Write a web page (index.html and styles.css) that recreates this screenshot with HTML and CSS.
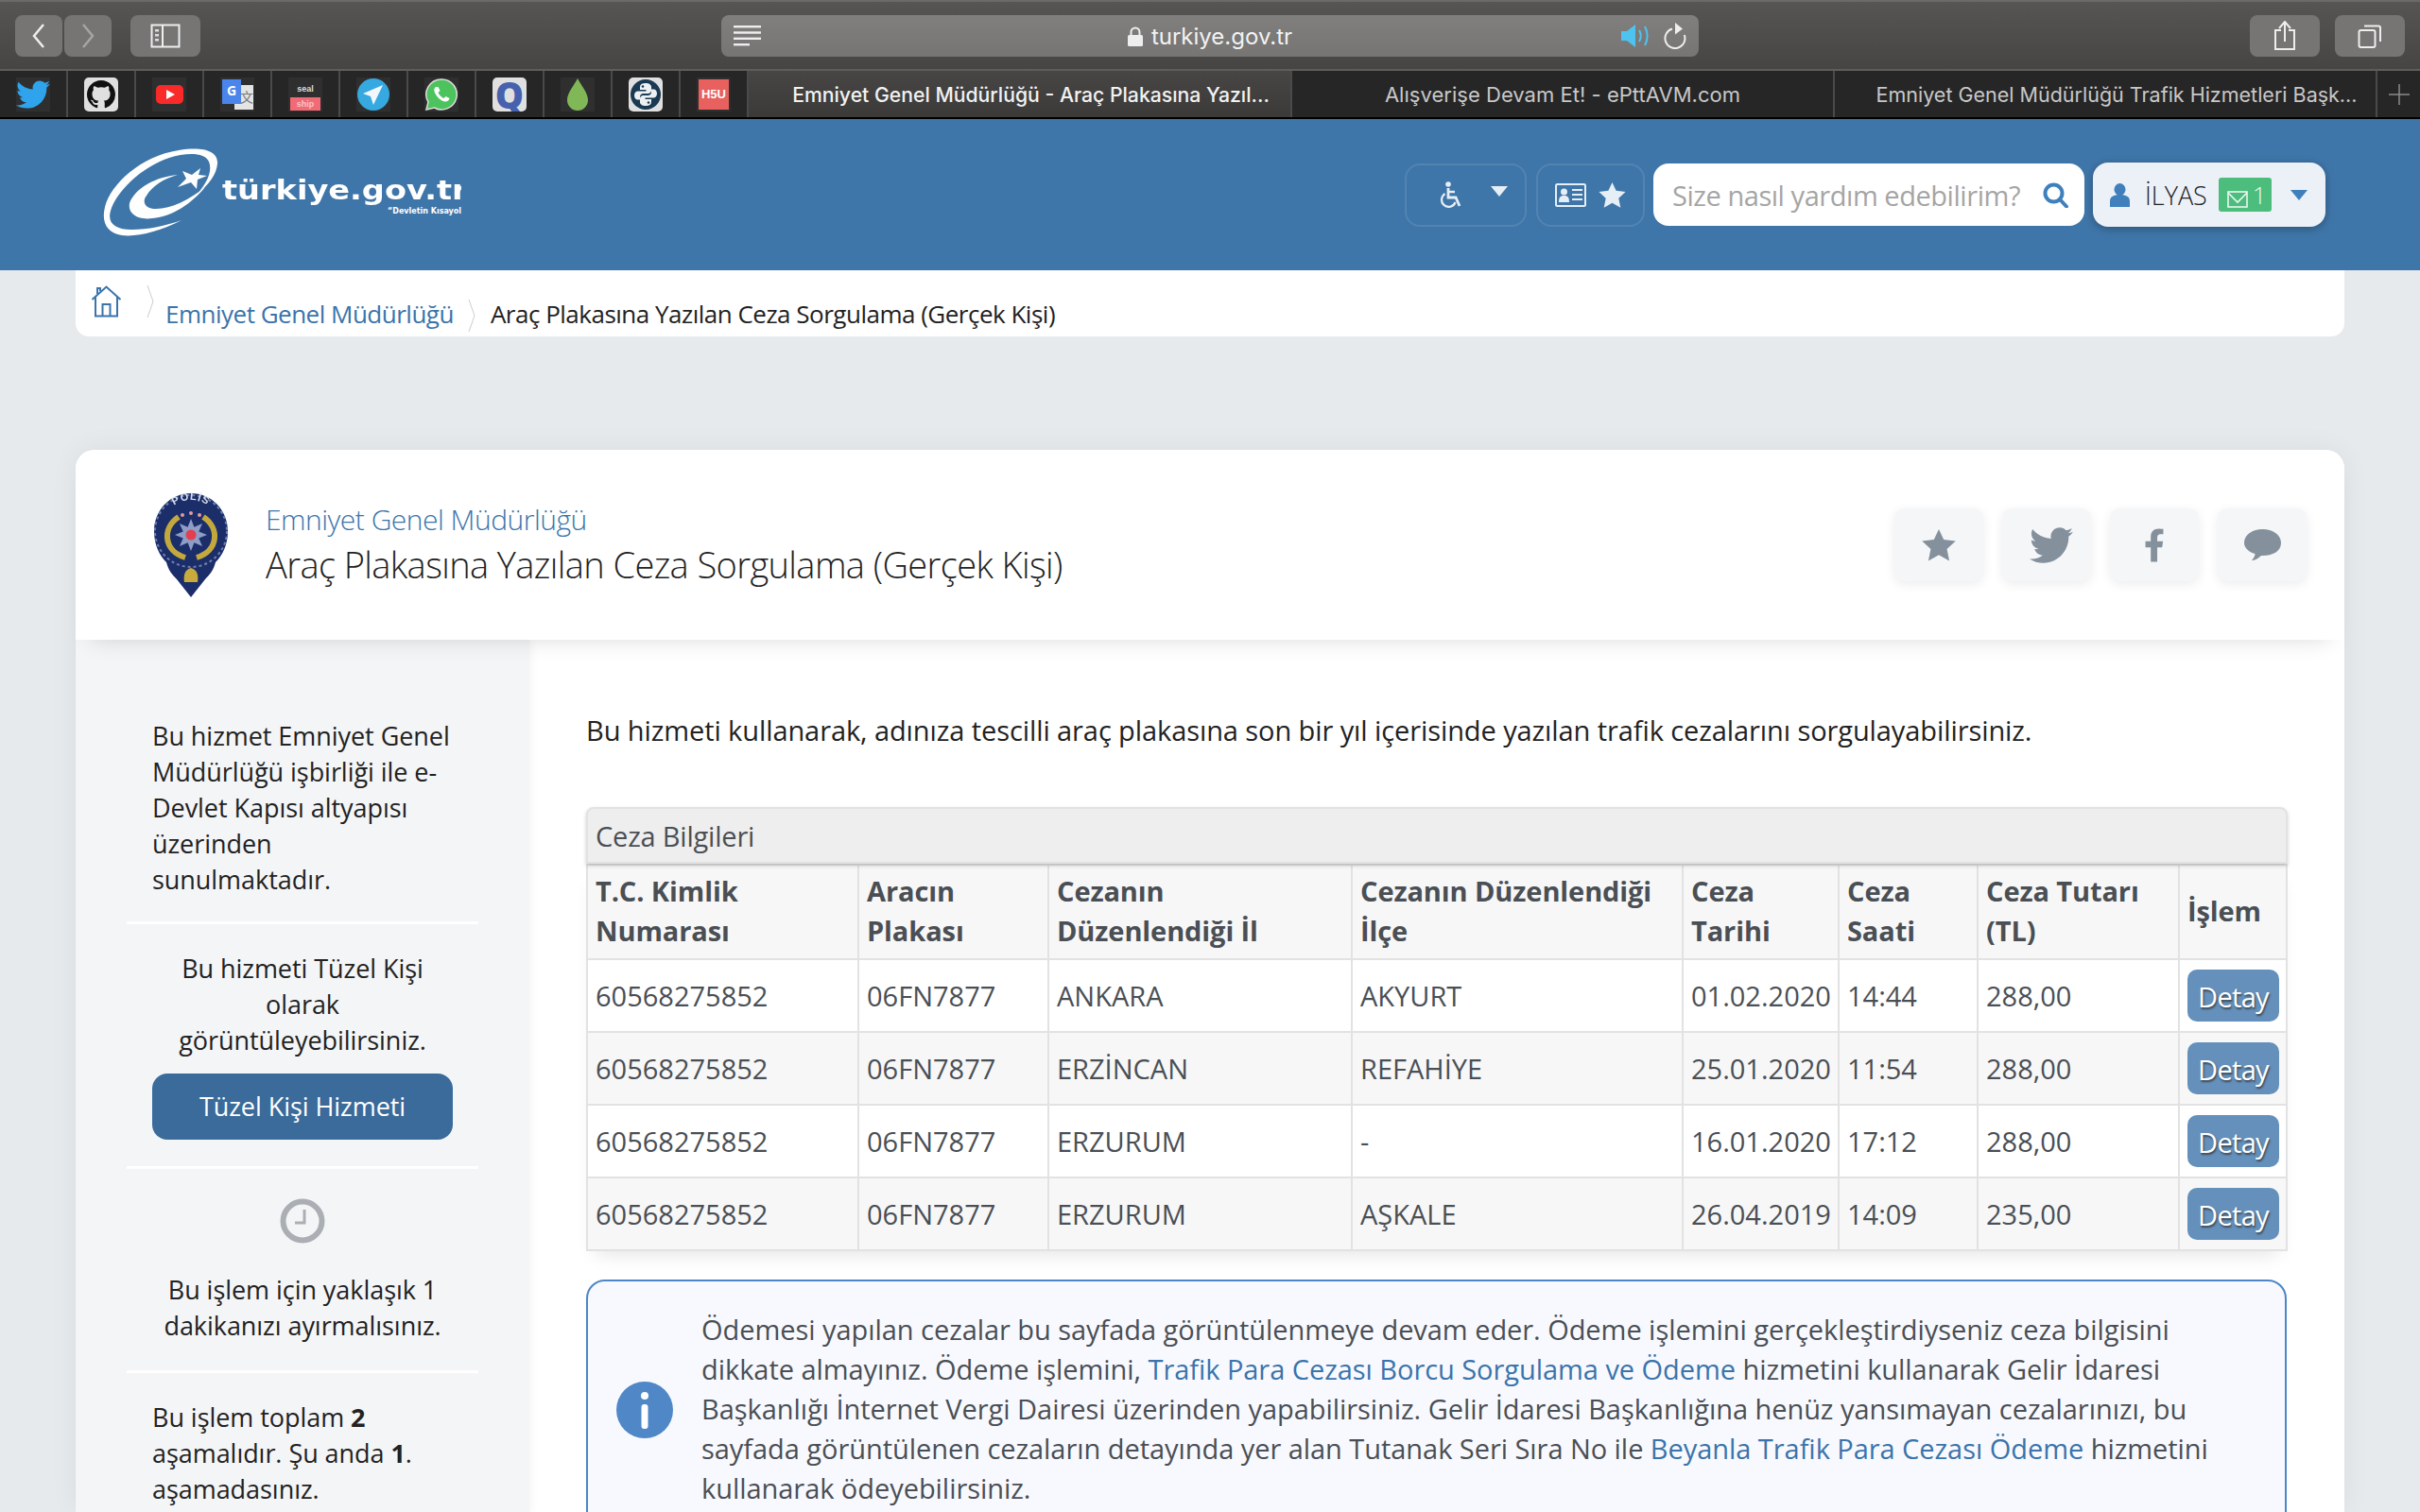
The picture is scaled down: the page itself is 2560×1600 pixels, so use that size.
FILE: index.html
```html
<!DOCTYPE html>
<html lang="tr">
<head>
    <meta charset="UTF-8">
    <title>Araç Plakasına Yazılan Ceza Sorgulama (Gerçek Kişi)</title>
    <link rel="stylesheet" href="styles.css">
</head>
<body>
<div class="toolbar">
    <div class="tool-btn nav-btn"><svg width="16" height="26" viewBox="0 0 16 26"><polyline points="13,1 3,13 13,25" fill="none" stroke="#eee" stroke-width="2.5"/></svg></div>
    <div class="tool-btn nav-btn next"><svg width="16" height="26" viewBox="0 0 16 26"><polyline points="3,1 13,13 3,25" fill="none" stroke="#a5a5a5" stroke-width="2.5"/></svg></div>
    <div class="tool-btn wide-btn side-toggle"><svg width="32" height="26" viewBox="0 0 32 26"><rect x="1.5" y="1.5" width="29" height="23" fill="none" stroke="#eee" stroke-width="2"/><line x1="13" y1="1" x2="13" y2="25" stroke="#eee" stroke-width="2"/><rect x="5" y="6" width="4" height="2.5" fill="#ddd"/><rect x="5" y="11" width="4" height="2.5" fill="#ddd"/><rect x="5" y="16" width="4" height="2.5" fill="#ddd"/></svg></div>
    <div class="url-bar">
        <svg class="reader" width="30" height="22" viewBox="0 0 30 22"><g fill="#eee"><rect y="0" width="29" height="2.4"/><rect y="6.3" width="29" height="2.4"/><rect y="12.6" width="29" height="2.4"/><rect y="19" width="17" height="2.4"/></g></svg>
        <div class="url-text">
            <svg width="16" height="22" viewBox="0 0 16 22"><path d="M3.5 9V6a4.5 4.5 0 0 1 9 0v3" fill="none" stroke="#eee" stroke-width="2"/><rect y="9" width="16" height="12" rx="1.5" fill="#eee"/></svg>
            <span>turkiye.gov.tr</span>
        </div>
        <div class="url-right">
            <svg width="34" height="24" viewBox="0 0 34 24"><path d="M0 7h6l9-7v24l-9-7H0z" fill="#4fc3f0"/><path d="M19 6c2 3.500 2 8.500 0 12" fill="none" stroke="#4fc3f0" stroke-width="2"/><path d="M25 2c3.500 6 3.500 14 0 20" fill="none" stroke="#4fc3f0" stroke-width="2"/></svg>
            <svg width="24" height="28" viewBox="0 0 24 28"><path d="M9 6.500A10.500 10.500 0 1 0 21.800 13" fill="none" stroke="#eee" stroke-width="2"/><path d="M12 0l8 6.500-8 6z" fill="#eee"/></svg>
        </div>
    </div>
    <div class="tool-btn wide-btn share"><svg width="24" height="32" viewBox="0 0 24 32"><path d="M8 10H2v20h20V10h-6" fill="none" stroke="#eee" stroke-width="2"/><path d="M12 22V2M6 8l6-7 6 7" fill="none" stroke="#eee" stroke-width="2"/></svg></div>
    <div class="tool-btn wide-btn tabs-btn"><svg width="26" height="26" viewBox="0 0 26 26"><rect x="1.500" y="7" width="17" height="18" rx="2" fill="none" stroke="#eee" stroke-width="2"/><path d="M7 2.500h15a2 2 0 0 1 2 2V19" fill="none" stroke="#eee" stroke-width="2"/></svg></div>
</div>

<div class="tabbar">
    <div class="bm"><span class="bm-icon"><svg width="36" height="36" viewBox="0 0 512 512"><path fill="#2fa3ec" d="M459.37 151.716c.325 4.548.325 9.097.325 13.645 0 138.72-105.583 298.558-298.558 298.558-59.452 0-114.68-17.219-161.137-47.106 8.447.974 16.568 1.299 25.34 1.299 49.055 0 94.213-16.568 130.274-44.832-46.132-.975-84.792-31.188-98.112-72.772 6.498.974 12.995 1.624 19.818 1.624 9.421 0 18.843-1.3 27.614-3.573-48.081-9.747-84.143-51.98-84.143-102.985v-1.299c13.969 7.797 30.214 12.67 47.431 13.319-28.264-18.843-46.781-51.005-46.781-87.391 0-19.492 5.197-37.36 14.294-52.954 51.655 63.675 129.3 105.258 216.365 109.807-1.624-7.797-2.599-15.918-2.599-24.04 0-57.828 46.782-104.934 104.934-104.934 30.213 0 57.502 12.67 76.67 33.137 23.715-4.548 46.456-13.32 66.599-25.34-7.798 24.366-24.366 44.833-46.132 57.827 21.117-2.273 41.584-8.122 60.426-16.243-14.292 20.791-32.161 39.308-52.628 54.253z"/></svg></span></div>
    <div class="bm"><span class="bm-icon light"><svg width="30" height="30" viewBox="0 0 16 16"><path fill="#111" d="M8 0C3.580 0 0 3.580 0 8c0 3.540 2.290 6.530 5.470 7.590.4.070.55-.17.55-.38 0-.19-.01-.82-.01-1.490-2.010.37-2.530-.49-2.690-.94-.09-.23-.48-.94-.82-1.130-.28-.15-.68-.52-.01-.53.63-.01 1.080.58 1.230.82.72 1.210 1.870.87 2.330.66.07-.52.28-.87.51-1.070-1.780-.2-3.640-.89-3.640-3.950 0-.87.31-1.590.82-2.150-.08-.2-.36-1.020.08-2.120 0 0 .67-.21 2.200.82.64-.18 1.320-.27 2-.27.68 0 1.360.09 2 .27 1.530-1.040 2.200-.82 2.200-.82.44 1.100.16 1.920.08 2.120.51.56.82 1.270.82 2.150 0 3.070-1.870 3.750-3.650 3.950.29.25.54.73.54 1.480 0 1.070-.01 1.930-.01 2.200 0 .21.15.46.55.38A8.013 8.013 0 0016 8c0-4.420-3.580-8-8-8z"/></svg></span></div>
    <div class="bm"><span class="bm-icon"><svg width="36" height="36" viewBox="0 0 36 36"><rect x="4" y="8" width="29" height="20" rx="5" fill="#f82a2a"/><path d="M15 13l9 5-9 5z" fill="#fff"/></svg></span></div>
    <div class="bm"><span class="bm-icon"><span class="gt-back">文</span><span class="gt-front">G</span></span></div>
    <div class="bm"><span class="bm-icon seal"><span class="seal-top">seal</span><span class="seal-bot">ship</span></span></div>
    <div class="bm"><span class="bm-icon"><svg width="36" height="36" viewBox="0 0 36 36"><circle cx="18" cy="18" r="17" fill="#36a9e1"/><path d="M28 8L7 17l8 3 3 9z" fill="#f2f7fb"/></svg></span></div>
    <div class="bm"><span class="bm-icon"><svg width="36" height="36" viewBox="0 0 36 36"><path d="M18 2a16 16 0 0 0-14 24L2 34l8.500-2A16 16 0 1 0 18 2z" fill="#4cc35c" stroke="#ddd" stroke-width="1.500"/><path d="M12 10c-2 1.500-2.500 4 0 8s6 7 10 7.500c2.500 0 4-1.500 4.500-3.500l-4-2-2 2c-2.500-1-5-3.500-6-6l2-2-2-4z" fill="#fff"/></svg></span></div>
    <div class="bm"><span class="bm-icon light"><span class="q-mark">Q</span></span></div>
    <div class="bm"><span class="bm-icon"><svg width="36" height="36" viewBox="0 0 36 36"><path d="M18 1c4 8 11 15 11 23a11 11 0 0 1-22 0C7 16 14 9 18 1z" fill="#80b857"/></svg></span></div>
    <div class="bm"><span class="bm-icon light"><svg width="34" height="34" viewBox="0 0 34 34"><circle cx="17" cy="17" r="16" fill="#1a3a52"/><path d="M17 5c-4 0-6 1.500-6 4v3h6.500v1.500H9c-2.500 0-4 2-4 4.500s1.500 4.500 3.500 4.500H11v-3c0-2 1.500-3.500 3.500-3.500h5c2 0 3.500-1.500 3.500-3.500V9c0-2.500-2.500-4-6-4z" fill="#eef1f3"/><path d="M17 29c4 0 6-1.500 6-4v-3h-6.500v-1.500H25c2.500 0 4-2 4-4.500s-1.500-4.500-3.500-4.500H23v3c0 2-1.500 3.500-3.500 3.500h-5c-2 0-3.500 1.500-3.500 3.500V25c0 2.500 2.500 4 6 4z" fill="#eef1f3"/><circle cx="14" cy="8.500" r="1.300" fill="#1a3a52"/><circle cx="20" cy="25.500" r="1.300" fill="#1a3a52"/></svg></span></div>
    <div class="bm"><span class="bm-icon"><span class="h5u">H5U</span></span></div>
    <div class="tab tab-active tab-long"><span>Emniyet Genel Müdürlüğü - Araç Plakasına Yazıl...</span></div>
    <div class="tab tab-short"><span>Alışverişe Devam Et! - ePttAVM.com</span></div>
    <div class="tab tab-long"><span>Emniyet Genel Müdürlüğü Trafik Hizmetleri Başk...</span></div>
    <div class="tab-plus"><svg width="22" height="22" viewBox="0 0 22 22"><path d="M11 0v22M0 11h22" stroke="#8b8b8b" stroke-width="1.500"/></svg></div>
</div>

<header class="site-header">
    <div class="logo">
        <svg width="122" height="94" viewBox="0 0 122 94">
            <path fill="#fff" d="M83 76C60 88 36 94 20 92 4 90-2 78 2 62 8 38 40 8 80 2c24-4 42 0 41 14-1 12-9 22-21 32 10-12 16-24 12-34-4-10-24-10-42-4C40 20 14 46 8 66c-4 14 6 20 22 20 18 0 36-4 53-10z"/>
            <path fill="#fff" d="M79 28C56 30 34 42 28 58c-2 12 10 18 24 16 22-2 42-16 56-33-16 13-36 23-52 23-12 0-15-8-10-14 6-10 18-18 33-22z"/>
            <polygon fill="#fff" points="110,29 100,33 99,43 93,36 79,41 88,32 84,24 94,28 103,21 101,28"/>
        </svg>
        <div class="logo-text">
            <div class="logo-name">türkiye.gov.tr</div>
            <div class="logo-sub">“Devletin Kısayolu”</div>
        </div>
    </div>
    <div class="head-tools">
        <div class="head-btn access">
            <svg width="27" height="29" viewBox="0 0 27 29"><circle cx="11" cy="3" r="2.800" fill="#e6eef6"/><path d="M11 7v10h8l4 9" fill="none" stroke="#e6eef6" stroke-width="2.800"/><path d="M11 11h7" stroke="#e6eef6" stroke-width="2.400"/><path d="M7.500 13a7.500 7.500 0 1 0 11 9" fill="none" stroke="#e6eef6" stroke-width="2.200"/></svg>
            <svg class="caret" width="18" height="11" viewBox="0 0 18 11"><path d="M0 0h18l-9 11z" fill="#e6eef6"/></svg>
        </div>
        <div class="head-btn favs">
            <svg width="33" height="25" viewBox="0 0 33 25"><rect x="1" y="1" width="31" height="23" rx="1.500" fill="none" stroke="#e6eef6" stroke-width="2"/><circle cx="9.500" cy="9" r="3.500" fill="#e6eef6"/><path d="M4 20c0-6 2-7 5.500-7s5.500 1 5.500 7z" fill="#e6eef6"/><path d="M18 7h11M18 12h11M18 17h11" stroke="#e6eef6" stroke-width="2"/></svg>
            <svg width="29" height="27" viewBox="0 0 24 23"><path d="M12 0l3.500 7.500 8.500 1-6.200 5.700 1.700 8.500L12 18.500 4.500 22.700l1.700-8.500L0 8.500l8.500-1z" fill="#e6eef6"/></svg>
        </div>
        <div class="search-box">
            <span class="search-hint">Size nasıl yardım edebilirim?</span>
            <svg width="27" height="27" viewBox="0 0 27 27"><circle cx="11.500" cy="11.500" r="9" fill="none" stroke="#3f80bc" stroke-width="4"/><path d="M18 18l7 7.500" stroke="#3f80bc" stroke-width="4" stroke-linecap="round"/></svg>
        </div>
        <div class="user-box">
            <svg width="21" height="25" viewBox="0 0 21 25"><ellipse cx="10.500" cy="6.500" rx="6" ry="6.500" fill="#3f80bc"/><path d="M0 25v-6c0-5 4-7 10.500-7S21 14 21 19v6z" fill="#3f80bc"/></svg>
            <span class="user-name">İLYAS</span>
            <span class="msg-badge">
                <svg width="22" height="18" viewBox="0 0 22 18"><rect x="1" y="1" width="20" height="16" fill="none" stroke="#e8f8ef" stroke-width="1.600"/><path d="M1 2l10 10L21 2" fill="none" stroke="#e8f8ef" stroke-width="1.600"/></svg>
                <span>1</span>
            </span>
            <svg width="18" height="11" viewBox="0 0 18 11"><path d="M0 0h18l-9 11z" fill="#3f80bc"/></svg>
        </div>
    </div>
</header>

<nav class="crumbs">
    <svg class="home" width="33" height="34" viewBox="0 0 33 34"><path d="M1.500 15L16.500 1.500 31.500 15M5 12v20.500h23V12M7 9V3h3v3M12.500 32.500V20h8v12.500" fill="none" stroke="#3a74ab" stroke-width="2"/></svg>
    <svg class="crumb-sep first" width="8" height="34" viewBox="0 0 8 34"><path d="M1 0l6 17-6 17" fill="none" stroke="#ccc" stroke-width="1"/></svg>
    <a class="crumb-link">Emniyet Genel Müdürlüğü</a>
    <svg class="crumb-sep second" width="8" height="34" viewBox="0 0 8 34"><path d="M1 0l6 17-6 17" fill="none" stroke="#ccc" stroke-width="1"/></svg>
    <span class="crumb-now">Araç Plakasına Yazılan Ceza Sorgulama (Gerçek Kişi)</span>
</nav>

<main class="card">
    <div class="card-head">
        <svg class="badge" width="80" height="112" viewBox="0 0 80 112">
            <defs>
                <filter id="soft"><feGaussianBlur stdDeviation="0.700"/></filter>
                <path id="badge-arc" d="M10 38A30 30 0 0 1 70 38"/>
            </defs>
            <g filter="url(#soft)">
                <path d="M40 1C18 1 1 19 1 41c0 15 6 26 13 33 2 8 6 13 11 18l15 19 15-19c5-5 9-10 11-18 7-7 13-18 13-33C79 19 62 1 40 1z" fill="#1c2f6b"/>
                <circle cx="40" cy="41" r="38" fill="none" stroke="#6f80ad" stroke-width="2" stroke-dasharray="3 3"/>
                <path d="M27 26C9 38 11 62 34 69" fill="none" stroke="#c3a93c" stroke-width="6"/>
                <path d="M53 26C71 38 69 62 46 69" fill="none" stroke="#c3a93c" stroke-width="6"/>
                <polygon fill="#8d9dc6" points="40,28 43.400,36.700 52,33 48.300,41.600 57,45 48.300,48.400 52,57 43.400,53.300 40,62 36.600,53.300 28,57 31.700,48.400 23,45 31.700,41.600 28,33 36.600,36.700"/>
                <circle cx="40" cy="45" r="5.500" fill="#e2404f"/>
                <circle cx="31" cy="24" r="2" fill="#e39aa4"/><circle cx="40" cy="22" r="2" fill="#e39aa4"/><circle cx="49" cy="24" r="2" fill="#e39aa4"/>
                <text class="badge-text"><textPath href="#badge-arc" startOffset="50%" text-anchor="middle">POLİS</textPath></text>
                <path d="M40 80c-7 2-8 8-7 15h14c1-7 0-13-7-15z" fill="#c9ab3c"/>
            </g>
        </svg>
        <div class="card-titles">
            <a class="org-link">Emniyet Genel Müdürlüğü</a>
            <h1>Araç Plakasına Yazılan Ceza Sorgulama (Gerçek Kişi)</h1>
        </div>
        <div class="share-row">
            <div class="share-btn"><svg width="36" height="34" viewBox="0 0 24 23"><path d="M12 0l3.500 7.500 8.500 1-6.200 5.700 1.700 8.500L12 18.500 4.500 22.700l1.700-8.500L0 8.500l8.500-1z" fill="#84919d"/></svg></div>
            <div class="share-btn"><svg class="bird" width="46" height="46" viewBox="0 0 512 512"><path fill="#84919d" d="M459.37 151.716c.325 4.548.325 9.097.325 13.645 0 138.72-105.583 298.558-298.558 298.558-59.452 0-114.68-17.219-161.137-47.106 8.447.974 16.568 1.299 25.34 1.299 49.055 0 94.213-16.568 130.274-44.832-46.132-.975-84.792-31.188-98.112-72.772 6.498.974 12.995 1.624 19.818 1.624 9.421 0 18.843-1.3 27.614-3.573-48.081-9.747-84.143-51.98-84.143-102.985v-1.299c13.969 7.797 30.214 12.67 47.431 13.319-28.264-18.843-46.781-51.005-46.781-87.391 0-19.492 5.197-37.36 14.294-52.954 51.655 63.675 129.3 105.258 216.365 109.807-1.624-7.797-2.599-15.918-2.599-24.04 0-57.828 46.782-104.934 104.934-104.934 30.213 0 57.502 12.67 76.67 33.137 23.715-4.548 46.456-13.32 66.599-25.34-7.798 24.366-24.366 44.833-46.132 57.827 21.117-2.273 41.584-8.122 60.426-16.243-14.292 20.791-32.161 39.308-52.628 54.253z"/></svg></div>
            <div class="share-btn"><svg width="22" height="36" viewBox="0 0 320 512"><path fill="#84919d" d="M279.14 288l14.220-92.660h-88.910v-60.130c0-25.350 12.420-50.060 52.240-50.060h40.420V6.260S260.430 0 225.360 0c-73.220 0-121.080 44.380-121.080 124.720v70.620H22.890V288h81.390v224h100.170V288z"/></svg></div>
            <div class="share-btn"><svg width="39" height="34" viewBox="0 0 39 34"><path d="M19.500 0C30 0 39 5.500 39 14.500S30 28 19.500 28h-1.500c-3 3-7 5-10 5 2-2 3.500-5 3.500-7C5 24 0 20 0 14.500 0 5.500 9 0 19.500 0z" fill="#84919d"/></svg></div>
        </div>
    </div>

    <div class="card-body">
        <aside class="side">
            <div class="side-item first">
                <p>Bu hizmet Emniyet Genel<br>Müdürlüğü işbirliği ile e-<br>Devlet Kapısı altyapısı<br>üzerinden<br>sunulmaktadır.</p>
            </div>
            <div class="side-item center">
                <p>Bu hizmeti Tüzel Kişi<br>olarak<br>görüntüleyebilirsiniz.</p>
                <a class="corp-btn">Tüzel Kişi Hizmeti</a>
            </div>
            <div class="side-item center timing">
                <svg class="clock" width="48" height="48" viewBox="0 0 48 48"><circle cx="24" cy="24" r="20.500" fill="none" stroke="#abafb3" stroke-width="6"/><path d="M26 12v14H16" fill="none" stroke="#abafb3" stroke-width="3"/></svg>
                <p>Bu işlem için yaklaşık 1<br>dakikanızı ayırmalısınız.</p>
            </div>
            <div class="side-item last">
                <p>Bu işlem toplam <b>2</b><br>aşamalıdır. Şu anda <b>1</b>.<br>aşamadasınız.</p>
            </div>
        </aside>

        <section class="content">
            <p class="intro">Bu hizmeti kullanarak, adınıza tescilli araç plakasına son bir yıl içerisinde yazılan trafik cezalarını sorgulayabilirsiniz.</p>
            <table class="fines">
                <caption>Ceza Bilgileri</caption>
                <colgroup>
                    <col class="c1"><col class="c2"><col class="c3"><col class="c4"><col class="c5"><col class="c6"><col class="c7"><col class="c8">
                </colgroup>
                <thead>
                    <tr>
                        <th>T.C. Kimlik Numarası</th>
                        <th>Aracın<br>Plakası</th>
                        <th>Cezanın<br>Düzenlendiği İl</th>
                        <th>Cezanın Düzenlendiği<br>İlçe</th>
                        <th>Ceza<br>Tarihi</th>
                        <th>Ceza<br>Saati</th>
                        <th>Ceza Tutarı<br>(TL)</th>
                        <th>İşlem</th>
                    </tr>
                </thead>
                <tbody>
                    <tr><td>60568275852</td><td>06FN7877</td><td>ANKARA</td><td>AKYURT</td><td>01.02.2020</td><td>14:44</td><td>288,00</td><td><a class="detail-btn">Detay</a></td></tr>
                    <tr><td>60568275852</td><td>06FN7877</td><td>ERZİNCAN</td><td>REFAHİYE</td><td>25.01.2020</td><td>11:54</td><td>288,00</td><td><a class="detail-btn">Detay</a></td></tr>
                    <tr><td>60568275852</td><td>06FN7877</td><td>ERZURUM</td><td>-</td><td>16.01.2020</td><td>17:12</td><td>288,00</td><td><a class="detail-btn">Detay</a></td></tr>
                    <tr><td>60568275852</td><td>06FN7877</td><td>ERZURUM</td><td>AŞKALE</td><td>26.04.2019</td><td>14:09</td><td>235,00</td><td><a class="detail-btn">Detay</a></td></tr>
                </tbody>
            </table>
            <div class="notice">
                <svg class="notice-icon" width="60" height="60" viewBox="0 0 60 60"><circle cx="30" cy="30" r="30" fill="#4f87c7"/><circle cx="30" cy="15" r="4" fill="#fff"/><rect x="26.500" y="24" width="7" height="26" rx="3" fill="#fff"/></svg>
                <p>Ödemesi yapılan cezalar bu sayfada görüntülenmeye devam eder. Ödeme işlemini gerçekleştirdiyseniz ceza bilgisini<br>dikkate almayınız. Ödeme işlemini, <a>Trafik Para Cezası Borcu Sorgulama ve Ödeme</a> hizmetini kullanarak Gelir İdaresi<br>Başkanlığı İnternet Vergi Dairesi üzerinden yapabilirsiniz. Gelir İdaresi Başkanlığına henüz yansımayan cezalarınızı, bu<br>sayfada görüntülenen cezaların detayında yer alan Tutanak Seri Sıra No ile <a>Beyanla Trafik Para Cezası Ödeme</a> hizmetini<br>kullanarak ödeyebilirsiniz.</p>
            </div>
        </section>
    </div>
</main>
</body>
</html>
```

FILE: styles.css
```css
*{
    margin: 0;
    padding: 0;
    box-sizing: border-box;
}
html, body{
    height: 1600px;
    overflow: hidden;
}
body{
    background: #e6eaed;
    font-family: "Open Sans", "Liberation Sans", sans-serif;
    color: #222;
}
a{
    color: #3a74ab;
}

/* browser chrome */
.toolbar{
    height: 75px;
    display: flex;
    align-items: center;
    padding: 0 16px;
    background: linear-gradient(#575553, #464543);
    border-top: 2px solid #6b6a68;
    border-bottom: 2px solid #5e5d5c;
}
.tool-btn{
    height: 44px;
    display: flex;
    align-items: center;
    justify-content: center;
    background: #767574;
    border-radius: 8px;
}
.nav-btn{
    width: 50px;
}
.next{
    margin-left: 2px;
}
.wide-btn{
    width: 74px;
}
.side-toggle{
    margin-left: 20px;
}
.url-bar{
    width: 1034px;
    height: 44px;
    margin-left: 551px;
    display: grid;
    grid-template-columns: 1fr auto 1fr;
    align-items: center;
    padding: 0 13px;
    background: linear-gradient(#807f7d, #767574);
    border-radius: 8px;
}
.url-text{
    display: flex;
    align-items: center;
    gap: 9px;
    padding-top: 2px;
    font-family: "Inter", "Liberation Sans", sans-serif;
    font-size: 24px;
    color: #f2f2f2;
}
.url-right{
    display: flex;
    justify-content: flex-end;
    align-items: center;
    gap: 11px;
}
.share{
    margin-left: 583px;
}
.tabs-btn{
    margin-left: 16px;
}
.tabbar{
    height: 51px;
    display: flex;
    background: #262626;
    border-bottom: 2px solid #000;
}
.bm{
    width: 72px;
    display: flex;
    align-items: center;
    justify-content: center;
    border-right: 2px solid #4a4a4a;
}
.bm-icon{
    width: 36px;
    height: 36px;
    display: flex;
    align-items: center;
    justify-content: center;
    position: relative;
    background: #2f2f2f;
    overflow: hidden;
}
.bm-icon.light{
    background: #e0e0e0;
    border-radius: 5px;
}
.gt-front{
    position: absolute;
    left: 2px;
    top: 2px;
    width: 20px;
    height: 26px;
    background: #4a85ec;
    color: #fff;
    font: bold 14px "Open Sans", sans-serif;
    text-align: center;
    line-height: 24px;
}
.gt-back{
    position: absolute;
    right: 1px;
    top: 8px;
    width: 20px;
    height: 26px;
    background: #e4e4e4;
    color: #777;
    font: 14px "Noto Sans CJK SC", sans-serif;
    text-align: right;
    line-height: 24px;
}
.seal{
    flex-direction: column;
    font: bold 9px "Liberation Sans", sans-serif;
    color: #ddd;
}
.seal-top{
    height: 20px;
    line-height: 22px;
}
.seal-bot{
    width: 32px;
    height: 14px;
    line-height: 14px;
    text-align: center;
    background: #f26a75;
    color: #f9c5ca;
}
.q-mark{
    font: 800 38px "Open Sans", sans-serif;
    line-height: 30px;
    color: #4661ae;
}
.h5u{
    width: 32px;
    height: 32px;
    background: #e8615f;
    color: #fff;
    font: bold 13px "Liberation Sans", sans-serif;
    line-height: 32px;
    text-align: center;
}
.tab{
    width: 574px;
    display: flex;
    align-items: center;
    justify-content: center;
    font-family: "Inter", "Liberation Sans", sans-serif;
    font-size: 22px;
    color: #c8c8c8;
    border-right: 2px solid #4a4a4a;
    white-space: nowrap;
}
.tab-long{
    padding-left: 24px;
    font-size: 21.5px;
}
.tab-short{
    letter-spacing: .03px;
}
.tab-active{
    width: 575px;
    background: linear-gradient(#474645, #3b3a39);
    color: #f2f2f2;
    font-weight: 500;
    font-size: 21.2px;
}
.tab-plus{
    flex: 1;
    display: flex;
    align-items: center;
    justify-content: center;
}

/* site header */
.site-header{
    height: 160px;
    display: flex;
    align-items: center;
    padding: 0 100px 0 109px;
    background: #3f76a9;
}
.logo{
    display: flex;
    align-items: flex-start;
    margin-top: -4px;
}
.logo-text{
    width: 253px;
    margin: 28px 0 0 4px;
    overflow: hidden;
    white-space: nowrap;
    color: #fff;
    font-family: "DejaVu Sans", sans-serif;
    font-weight: 700;
}
.logo-name{
    font-size: 28px;
    line-height: 34px;
    transform: scaleX(1.2);
    transform-origin: left center;
}
.logo-sub{
    padding-left: 175px;
    font-size: 8px;
    line-height: 9px;
}
.head-tools{
    margin-left: auto;
    display: flex;
    align-items: center;
}
.head-btn{
    height: 67px;
    display: flex;
    align-items: center;
    border: 2px solid rgba(255,255,255,.1);
    border-radius: 16px;
}
.access{
    width: 129px;
    padding-left: 33px;
    gap: 29px;
}
.access .caret{
    margin-top: -8px;
}
.favs{
    width: 115px;
    margin-left: 10px;
    padding-left: 18px;
    gap: 13px;
}
.search-box{
    width: 456px;
    height: 66px;
    margin-left: 9px;
    display: flex;
    align-items: center;
    justify-content: space-between;
    padding: 0 17px 0 20px;
    background: #fff;
    border-radius: 16px;
}
.search-hint{
    font-size: 29px;
    letter-spacing: -.45px;
    font-weight: 400;
    color: #a5a5a5;
    white-space: nowrap;
}
.user-box{
    width: 246px;
    height: 68px;
    margin-left: 9px;
    display: flex;
    align-items: center;
    padding-left: 18px;
    background: #ecf1f8;
    border-radius: 16px;
    box-shadow: 0 2px 10px rgba(0,0,0,.3);
}
.user-name{
    margin-left: 16px;
    font-size: 27px;
    font-weight: 300;
    color: #222;
}
.msg-badge{
    width: 56px;
    height: 36px;
    margin: 0 20px 0 12px;
    display: flex;
    align-items: center;
    padding: 0 0 0 9px;
    gap: 5px;
    background: #4cbd7c;
    color: #e8f8ef;
    font-size: 26px;
    font-weight: 300;
    border-radius: 3px;
}
.msg-badge svg{
    margin-top: 10px;
}

/* breadcrumb */
.crumbs{
    height: 70px;
    margin: 0 80px;
    display: flex;
    align-items: flex-start;
    padding-left: 16px;
    background: #fff;
    border-radius: 0 0 14px 14px;
}
.home{
    margin-top: 16px;
}
.crumb-sep.first{
    margin: 16px 12px 0 26px;
}
.crumb-sep.second{
    margin: 31px 16px 0 15px;
}
.crumb-link, .crumb-now{
    margin-top: 28px;
    font-size: 26px;
    letter-spacing: -.5px;
    line-height: 36px;
    font-weight: 400;
    white-space: nowrap;
}

/* page card */
.card{
    margin: 120px 80px 0;
    background: #fff;
    border-radius: 20px 20px 0 0;
    box-shadow: 0 0 30px rgba(0,0,0,.06);
}
.card-head{
    height: 201px;
    display: flex;
    align-items: center;
    padding: 0 40px 0 82px;
    position: relative;
    background: #fff;
    border-radius: 20px 20px 0 0;
    box-shadow: 0 16px 24px -16px rgba(0,0,0,.14);
}
.badge-text{
    font: bold 11px "Liberation Sans", sans-serif;
    letter-spacing: 1px;
    fill: #d9deea;
}
.card-titles{
    margin-left: 39px;
}
.org-link{
    display: block;
    font-size: 30px;
    letter-spacing: -.5px;
    line-height: 40px;
    font-weight: 300;
}
h1{
    font-size: 38px;
    letter-spacing: -.6px;
    line-height: 54px;
    font-weight: 300;
    color: #222;
}
.share-row{
    margin-left: auto;
    display: flex;
    gap: 20px;
}
.share-btn{
    width: 94px;
    height: 77px;
    display: flex;
    align-items: center;
    justify-content: center;
    background: #f5f6f8;
    border-radius: 10px;
    box-shadow: 0 3px 12px rgba(0,0,0,.08);
}
.bird{
    margin-left: 9px;
}
.card-body{
    display: flex;
    height: 923px;
    background: #fff;
}
.side{
    width: 480px;
    flex: none;
    padding: 83px 54px 0;
    background: #f4f5f7;
    box-shadow: 3px 0 8px rgba(0,0,0,.04);
}
.side-item{
    padding: 0 27px 28px;
    margin-bottom: 28px;
    border-bottom: 3px solid #fff;
    font-size: 27px;
    letter-spacing: -.05px;
    line-height: 38px;
    white-space: nowrap;
    color: #222;
}
.side-item.first{
    padding-bottom: 25px;
}
.side-item.timing{
    padding-top: 3px;
}
.side-item.center{
    text-align: center;
}
.side-item.last{
    border-bottom: 0;
}
.corp-btn{
    display: block;
    height: 70px;
    margin-top: 16px;
    line-height: 70px;
    background: #3a6b9a;
    color: #fff;
    border-radius: 16px;
}
.clock{
    display: block;
    margin: 0 auto 30px;
}
.content{
    flex: 1;
    padding: 74px 61px 0 60px;
    position: relative;
    overflow: hidden;
}
.intro{
    font-size: 29px;
    letter-spacing: -.09px;
    line-height: 44px;
    margin-bottom: 59px;
    white-space: nowrap;
    color: #222;
}

/* results table */
.fines{
    width: 1798px;
    table-layout: fixed;
    border-collapse: collapse;
    font-size: 29px;
    color: #4a4f55;
    box-shadow: 0 12px 20px -10px rgba(0,0,0,.12);
}
.fines caption{
    height: 60px;
    padding-left: 8px;
    line-height: 58px;
    text-align: left;
    font-weight: 400;
    letter-spacing: -.2px;
    background: #eee;
    border: 2px solid #e2e2e2;
    border-radius: 8px 8px 0 0;
    box-shadow: 0 2px 4px rgba(0,0,0,.18);
    color: #4a4f55;
    position: relative;
}
.c1{ width: 287px; }
.c2{ width: 201px; }
.c3{ width: 321px; }
.c4{ width: 350px; }
.c5{ width: 165px; }
.c6{ width: 147px; }
.c7{ width: 213px; }
.c8{ width: 114px; }
.fines th, .fines td{
    padding: 0 8px;
    border: 2px solid #e2e2e2;
    text-align: left;
    vertical-align: middle;
}
.fines th{
    height: 100px;
    padding-bottom: 2px;
    line-height: 42px;
    letter-spacing: -.1px;
    font-weight: 700;
    background: #f7f7f7;
}
.fines td{
    height: 77px;
    font-weight: 400;
    white-space: nowrap;
}
.fines tbody tr:nth-child(even){
    background: #f7f7f7;
}
.detail-btn{
    display: block;
    width: 97px;
    height: 55px;
    line-height: 57px;
    text-align: center;
    letter-spacing: -.7px;
    background: #6490bb;
    color: #fff;
    border-radius: 10px;
    text-shadow: 1px 2px 2px #3c4650;
}

/* info box */
.notice{
    margin-top: 30px;
    height: 400px;
    display: flex;
    padding: 30px 0 0 30px;
    background: #f8f9fe;
    border: 2px solid #4d86c6;
    border-radius: 20px 20px 0 0;
}
.notice-icon{
    flex: none;
    margin-top: 76px;
}
.notice p{
    margin-left: 30px;
    font-size: 29px;
    letter-spacing: -.05px;
    line-height: 42px;
    color: #4a4f55;
    white-space: nowrap;
}
```
